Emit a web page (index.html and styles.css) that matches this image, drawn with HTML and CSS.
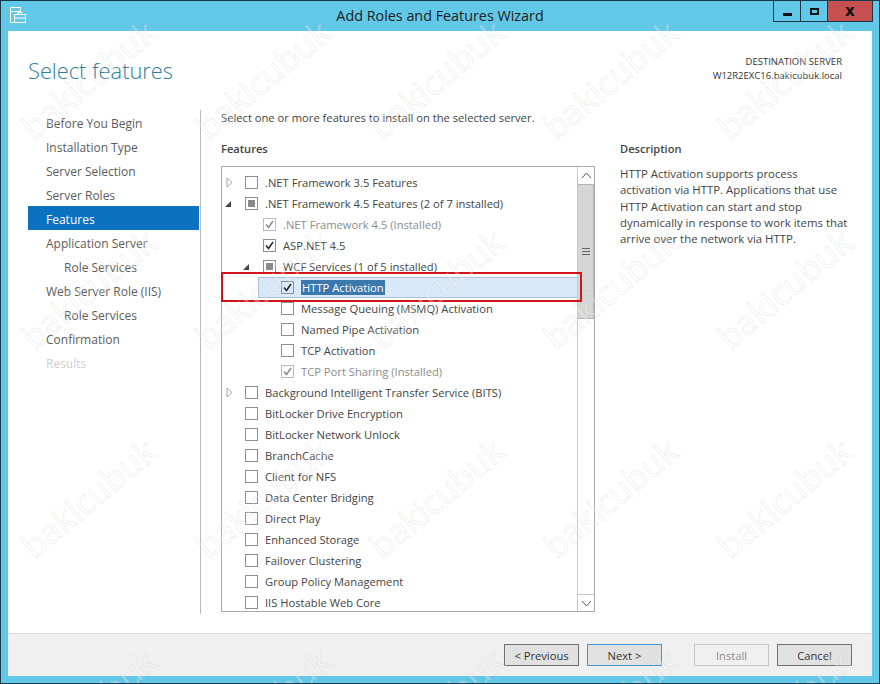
FILE: index.html
```html
<!DOCTYPE html>
<html lang="en">
<head>
<meta charset="utf-8">
<title>Add Roles and Features Wizard</title>
<link rel="stylesheet" href="styles.css">
</head>
<body>
<div class="window">
  <header class="titlebar">
    <svg class="app-icon" width="16" height="16" viewBox="0 0 16 16">
      <path d="M.5.500h10v6M.5.500v15h3.500M.5 4.500h10" fill="none" stroke="#fff"/>
      <path d="M4.500 7.500h11v8h-11zM8 7.500v-2h4v2M4.500 11h11" fill="#62c8e8" stroke="#fff"/>
    </svg>
    <div class="title">Add Roles and Features Wizard</div>
    <div class="controls">
      <button class="ctl"><span class="min"></span></button>
      <button class="ctl"><span class="max"></span></button>
      <button class="ctl close">X</button>
    </div>
  </header>
  <main class="body">
    <div class="top">
      <h1>Select features</h1>
      <div class="dest">DESTINATION SERVER<br>W12R2EXC16.bakicubuk.local</div>
    </div>
    <div class="content">
      <nav class="steps">
        <div class="step">Before You Begin</div>
        <div class="step">Installation Type</div>
        <div class="step">Server Selection</div>
        <div class="step">Server Roles</div>
        <div class="step active">Features</div>
        <div class="step">Application Server</div>
        <div class="step sub">Role Services</div>
        <div class="step">Web Server Role (IIS)</div>
        <div class="step sub">Role Services</div>
        <div class="step">Confirmation</div>
        <div class="step off">Results</div>
      </nav>
      <section class="pane">
        <p class="intro">Select one or more features to install on the selected server.</p>
        <div class="cols">
          <div class="features">
            <h2>Features</h2>
            <div class="listbox">
              <div class="tree">
                <div class="row"><i class="arrow"><svg class="tw-r" width="7" height="11" viewBox="0 0 7 11"><path d="M1 1l5 4.500-5 4.500z" fill="#fff" stroke="#a6a6a6"/></svg></i><i class="box"></i><span>.NET Framework 3.5 Features</span></div>
                <div class="row"><i class="arrow down"></i><i class="box part"></i><span>.NET Framework 4.5 Features (2 of 7 installed)</span></div>
                <div class="row l1"><i class="box chk dis"><svg viewBox="0 0 13 13"><path d="M3 6.500l2.500 3L10 3"/></svg></i><span class="dim">.NET Framework 4.5 (Installed)</span></div>
                <div class="row l1"><i class="box chk"><svg viewBox="0 0 13 13"><path d="M3 6.500l2.500 3L10 3"/></svg></i><span>ASP.NET 4.5</span></div>
                <div class="row l1b"><i class="arrow down"></i><i class="box part"></i><span>WCF Services (1 of 5 installed)</span></div>
                <div class="row l2 selected"><i class="box chk"><svg viewBox="0 0 13 13"><path d="M3 6.500l2.500 3L10 3"/></svg></i><span class="hl">HTTP Activation</span></div>
                <div class="row l2"><i class="box"></i><span>Message Queuing (MSMQ) Activation</span></div>
                <div class="row l2"><i class="box"></i><span>Named Pipe Activation</span></div>
                <div class="row l2"><i class="box"></i><span>TCP Activation</span></div>
                <div class="row l2"><i class="box chk dis"><svg viewBox="0 0 13 13"><path d="M3 6.500l2.500 3L10 3"/></svg></i><span class="dim">TCP Port Sharing (Installed)</span></div>
                <div class="row"><i class="arrow"><svg class="tw-r" width="7" height="11" viewBox="0 0 7 11"><path d="M1 1l5 4.500-5 4.500z" fill="#fff" stroke="#a6a6a6"/></svg></i><i class="box"></i><span>Background Intelligent Transfer Service (BITS)</span></div>
                <div class="row"><i class="arrow"></i><i class="box"></i><span>BitLocker Drive Encryption</span></div>
                <div class="row"><i class="arrow"></i><i class="box"></i><span>BitLocker Network Unlock</span></div>
                <div class="row"><i class="arrow"></i><i class="box"></i><span>BranchCache</span></div>
                <div class="row"><i class="arrow"></i><i class="box"></i><span>Client for NFS</span></div>
                <div class="row"><i class="arrow"></i><i class="box"></i><span>Data Center Bridging</span></div>
                <div class="row"><i class="arrow"></i><i class="box"></i><span>Direct Play</span></div>
                <div class="row"><i class="arrow"></i><i class="box"></i><span>Enhanced Storage</span></div>
                <div class="row"><i class="arrow"></i><i class="box"></i><span>Failover Clustering</span></div>
                <div class="row"><i class="arrow"></i><i class="box"></i><span>Group Policy Management</span></div>
                <div class="row"><i class="arrow"></i><i class="box"></i><span>IIS Hostable Web Core</span></div>
              </div>
              <div class="scrollbar">
                <div class="sb-btn"><svg width="11" height="7" viewBox="0 0 11 7"><path d="M1 6l4.500-5L10 6" fill="none" stroke="#555"/></svg></div>
                <div class="sb-thumb"><span class="grip"></span></div>
                <div class="sb-track"></div>
                <div class="sb-btn end"><svg width="11" height="7" viewBox="0 0 11 7"><path d="M1 1l4.500 5L10 1" fill="none" stroke="#555"/></svg></div>
              </div>
            </div>
            <div class="redbox"></div>
          </div>
          <aside class="desc">
            <h2>Description</h2>
            <p>HTTP Activation supports process activation via HTTP. Applications that use HTTP Activation can start and stop dynamically in response to work items that arrive over the network via HTTP.</p>
          </aside>
        </div>
      </section>
    </div>
  </main>
  <footer class="footer">
    <button class="btn">&lt; Previous</button>
    <button class="btn focus">Next &gt;</button>
    <button class="btn off">Install</button>
    <button class="btn">Cancel</button>
  </footer>
  <div class="marks">
    <span>bakicubuk</span><span>bakicubuk</span><span>bakicubuk</span><span>bakicubuk</span><span>bakicubuk</span>
    <span>bakicubuk</span><span>bakicubuk</span><span>bakicubuk</span><span>bakicubuk</span><span>bakicubuk</span>
    <span>bakicubuk</span><span>bakicubuk</span><span>bakicubuk</span><span>bakicubuk</span><span>bakicubuk</span>
    <span>bakicubuk</span><span>bakicubuk</span><span>bakicubuk</span><span>bakicubuk</span><span>bakicubuk</span>
  </div>
</div>
</body>
</html>
```
FILE: styles.css
```css
* { box-sizing: border-box; }
html, body { margin: 0; padding: 0; }
body { width: 880px; height: 684px; overflow: hidden; font-family: "Open Sans", "Noto Sans", sans-serif; font-size: 11.2px; color: #444; }
.window { position: relative; width: 880px; height: 684px; background: #62c8e8; border: 1px solid #17394a; padding: 0 7px 7px; display: flex; flex-direction: column; overflow: hidden; }
.titlebar { height: 30px; flex: none; display: flex; align-items: flex-start; position: relative; }
.app-icon { margin: 6px 0 0 2px; }
.title { position: absolute; left: 0; right: 0; top: 5px; text-align: center; font-size: 14.350px; line-height: 19px; color: #222; }
.controls { margin-left: auto; margin-right: -1px; display: flex; height: 21px; border: 1px solid #17394a; border-top: 0; }
.ctl { width: 27px; height: 20px; padding: 0; border: 0; border-right: 1px solid #17394a; background: transparent; display: flex; align-items: center; justify-content: center; }
.ctl:nth-child(2) { width: 27px; }
.ctl.close { width: 44px; border-right: 0; background: #c75050; font: 800 13px "Open Sans", sans-serif; color: #111; }
.min { width: 9px; height: 3px; background: #111; margin-top: 7px; }
.max { width: 9px; height: 7px; border: 2px solid #111; margin-top: 1px; }
.body { flex: 1; min-height: 0; background: #fff; display: flex; flex-direction: column; border-bottom: 1px solid #dcdcdc; }
.top { height: 79px; flex: none; display: flex; justify-content: space-between; padding: 0 30px 0 20px; }
h1 { margin: 25px 0 0; font-size: 21.800px; line-height: 30px; font-weight: 300; color: #2f7da0; }
.dest { margin-top: 24px; text-align: right; font-size: 9.500px; line-height: 13.500px; color: #333; }
.content { flex: 1; min-height: 0; display: flex; }
.steps { width: 172px; flex: none; margin-left: 20px; font-size: 12px; }
.step { height: 24px; line-height: 28px; padding-left: 18px; color: #5c5c5c; width: 171px; }
.step.sub { padding-left: 36px; }
.step.active { background: #0a72c1; color: #fff; }
.step.off { color: #cfcfcf; }
.pane { flex: 1; min-width: 0; border-left: 1px solid #b9b9b9; margin-bottom: 19px; padding-left: 20px; }
.intro { margin: -1px 0 0; line-height: 17px; color: #444; }
.cols { display: flex; margin-top: 14px; }
.features { width: 374px; flex: none; position: relative; }
h2 { margin: 0; font-size: 11.100px; line-height: 17px; font-weight: 600; color: #444; }
.listbox { margin-top: 9px; width: 374px; height: 446px; border: 1px solid #aaa; display: flex; overflow: hidden; }
.tree { flex: 1; min-width: 0; padding-top: 5px; }
.row { height: 21px; display: flex; align-items: center; white-space: nowrap; color: #444; }
.arrow { width: 23px; flex: none; height: 12px; position: relative; display: block; }
.tw-r { position: absolute; left: 4px; top: 0; }
.arrow.down::before { content: ""; position: absolute; left: 3px; top: 3px; border-style: solid; border-width: 0 0 6px 6px; border-color: transparent transparent #444 transparent; }
.box { width: 13px; height: 13px; flex: none; border: 1px solid #8e8e8e; margin-right: 7px; display: block; position: relative; }
.box.part::after { content: ""; position: absolute; inset: 2px; background: #8a8a8a; }
.box svg { position: absolute; left: -1px; top: -1px; width: 13px; height: 13px; }
.box svg path { fill: none; stroke: #222; stroke-width: 1.500; }
.box.dis { border-color: #bbb; }
.box.dis svg path { stroke: #8a8a8a; }
.dim { color: #8c8c8c; }
.l1 { padding-left: 41px; }
.l1b { padding-left: 18px; }
.l2 { padding-left: 59px; }
.row.selected { margin-left: 36px; padding-left: 23px; background: #d9e9fa; box-shadow: inset 0 0 0 1px #a9c1dc; width: 320px; }
.hl { background: #3a78ad; color: #fff; line-height: 15px; padding: 0 1px; }
.scrollbar { width: 17px; flex: none; display: flex; flex-direction: column; border-left: 1px solid #c9c9c9; }
.sb-btn { height: 17px; flex: none; display: flex; align-items: center; justify-content: center; background: #fff; }
.sb-btn.end { border-top: 1px solid #c9c9c9; }
.sb-thumb { height: 135px; flex: none; background: #d6d6d6; border: 1px solid #b5b5b5; border-left: 0; display: flex; align-items: center; justify-content: center; }
.grip { width: 8px; height: 7px; border-top: 1px solid #666; border-bottom: 1px solid #666; background: linear-gradient(#666,#666) center / 100% 1px no-repeat; }
.sb-track { flex: 1; background: #fff; }
.redbox { position: absolute; left: 0; top: 132px; width: 361px; height: 30px; border: 2px solid #d0141a; }
.desc { margin-left: 25px; width: 229px; }
.desc p { margin: 9px 0 0; font-size: 11.400px; line-height: 16.250px; color: #444; }
.footer { height: 42px; flex: none; background: #f0f0f0; display: flex; align-items: flex-start; padding: 10px 20px 0 0; justify-content: flex-end; }
.btn { width: 75px; height: 22px; padding: 0; margin-left: 8px; background: #e1e1e1; border: 1px solid #707070; font: 11.200px "Open Sans", sans-serif; color: #333; }
.btn.focus { border-color: #4a93d8; }
.btn.off { margin-left: 32px; background: #f0f0f0; border-color: #c6c6c6; color: #8c8c8c; }
.marks { position: absolute; left: 0; top: -27px; display: grid; grid-template-columns: repeat(5, 174px); grid-template-rows: repeat(4, 209.500px); pointer-events: none; }
.marks span { display: flex; align-items: center; justify-content: center; font: 400 34px "Open Sans", sans-serif; color: rgba(255,255,255,.3); -webkit-text-stroke: 1px rgba(150,150,150,.14); transform: rotate(-40deg); white-space: nowrap; }
```
